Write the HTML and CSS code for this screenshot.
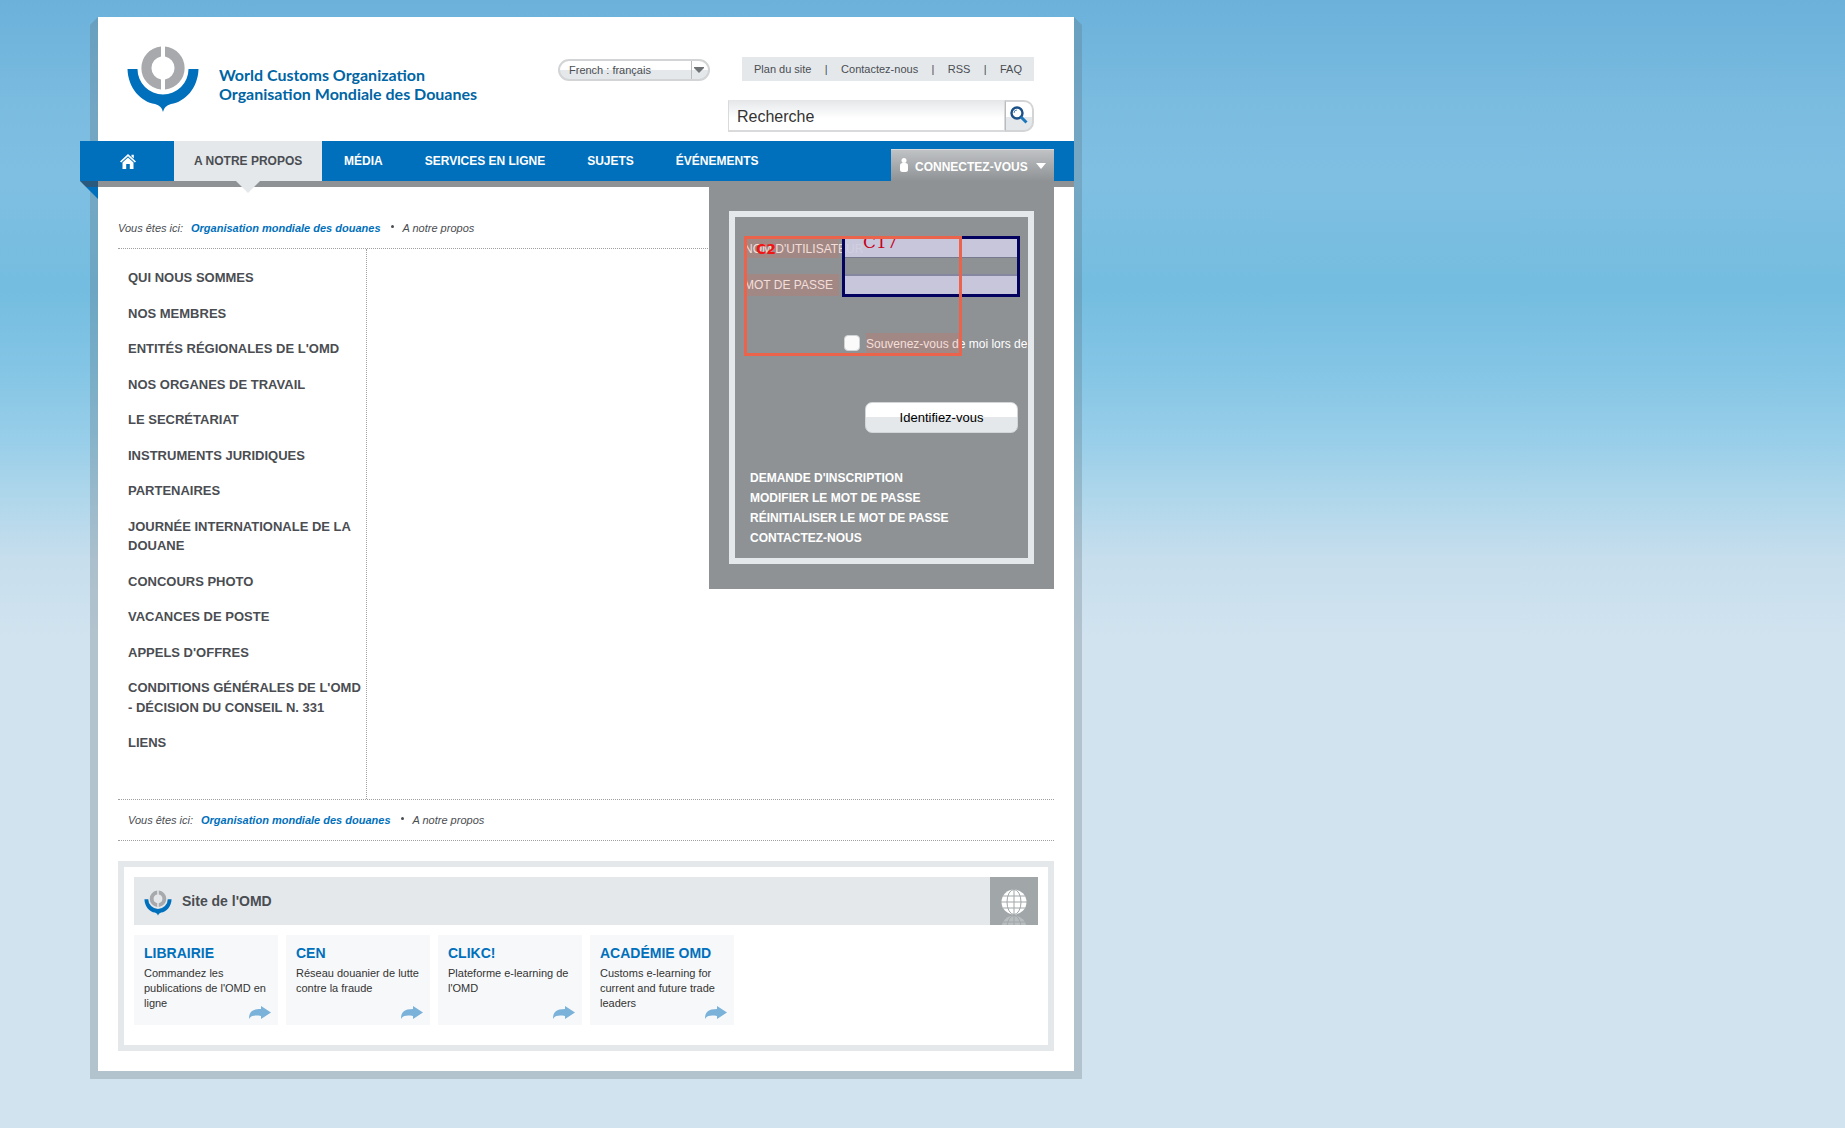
FILE: index.html
```html
<!DOCTYPE html>
<html lang="fr">
<head>
<meta charset="utf-8">
<title>Organisation mondiale des douanes</title>
<link rel="stylesheet" href="styles.css">
</head>
<body>
<svg class="defs" aria-hidden="true">
  <symbol id="anchor" viewBox="0 0 72 68">
    <path class="ring" d="M34 1.400A21.700 21.700 0 0 0 34 44.600V34.500A11.700 11.700 0 0 1 34 11.500ZM38 1.400A21.700 21.700 0 0 1 38 44.600V34.500A11.700 11.700 0 0 0 38 11.500Z"/>
    <path class="hull" d="M.5 24H10.500A25.500 25.500 0 0 0 61.500 24H71.500C71 43 58 57 44 59Q37 61 36 67Q35 61 28 59C14 57 1 43 .5 24Z"/>
  </symbol>
  <symbol id="share" viewBox="0 0 22 13">
    <path d="M0 13C0 6 3 3 12 3V0L22 6.500L12 13V10C6 9 2 9.500 0 13Z" fill="#7ab2da"/>
  </symbol>
</svg>
<div class="page">
  <header class="header">
    <a class="brand" href="#">
      <svg class="brand-mark"><use href="#anchor"/></svg>
      <span class="brand-name">World Customs Organization<br>Organisation Mondiale des Douanes</span>
    </a>
    <div class="language">
      <select aria-label="Langue"><option>French : français</option></select>
      <svg class="language-arrow" viewBox="0 0 10 6"><path d="M0 0H10V1L5 6L0 1Z" fill="#6f7376"/></svg>
    </div>
    <div class="tools">
      <nav class="quick" aria-label="Liens rapides">
        <a href="#">Plan du site</a><span>|</span><a href="#">Contactez-nous</a><span>|</span><a href="#">RSS</a><span>|</span><a href="#">FAQ</a>
      </nav>
      <form class="search">
        <input type="text" value="Recherche" aria-label="Recherche">
        <button type="button" aria-label="Lancer la recherche">
          <svg viewBox="0 0 18 18"><circle cx="7" cy="7" r="5.500" fill="none" stroke="#1c5088" stroke-width="2.400"/><path d="M4 7A3 3 0 0 1 7 4" fill="none" stroke="#4d84b5"/><path d="M11 11L16.500 16.500" stroke="#1d78bb" stroke-width="3"/></svg>
        </button>
      </form>
    </div>
  </header>

  <nav class="menu" aria-label="Menu principal">
    <a class="home" href="#" aria-label="Accueil">
      <svg viewBox="0 0 16 15"><path d="M8 0L16 7.500L14.800 8.500L8 2.200L1.200 8.500L0 7.500ZM11.500 .8H13.800V4.500L11.500 2.500Z" fill="#fff"/><path d="M2.500 8.500L8 3.500L13.500 8.500V15H9.800V10H6.200V15H2.500Z" fill="#fff"/></svg>
    </a>
    <a class="active" href="#">A NOTRE PROPOS</a>
    <a href="#">MÉDIA</a>
    <a href="#">SERVICES EN LIGNE</a>
    <a href="#">SUJETS</a>
    <a href="#">ÉVÉNEMENTS</a>
    <button class="connect" type="button">
      <svg class="person" viewBox="0 0 8 14"><circle cx="4" cy="2.500" r="2.500" fill="#fff"/><rect x="0" y="5" width="8" height="9" rx="2.500" fill="#fff"/></svg>
      CONNECTEZ-VOUS
      <svg class="caret" viewBox="0 0 10 6"><path d="M0 0H10L5 6Z" fill="#fff"/></svg>
    </button>
  </nav>

  <aside class="login">
    <div class="login-box">
      <form class="login-form">
        <label class="caption caption-user" for="user">NOM D'UTILISATEUR</label>
        <input class="field" id="user" type="text">
        <label class="caption" for="pass">MOT DE PASSE</label>
        <input class="field" id="pass" type="password">
        <div class="remember">
          <input id="keep" type="checkbox">
          <label for="keep"><span>Souvenez-vous d</span>e moi lors de</label>
        </div>
        <button class="submit" type="button">Identifiez-vous</button>
        <div class="mark mark-inputs"><span>C17</span></div>
        <div class="mark mark-labels"><span>C2</span></div>
      </form>
      <ul class="login-links">
        <li><a href="#">DEMANDE D'INSCRIPTION</a></li>
        <li><a href="#">MODIFIER LE MOT DE PASSE</a></li>
        <li><a href="#">RÉINITIALISER LE MOT DE PASSE</a></li>
        <li><a href="#">CONTACTEZ-NOUS</a></li>
      </ul>
    </div>
  </aside>

  <div class="content">
    <p class="crumbs"><span>Vous êtes ici:</span><a href="#">Organisation mondiale des douanes</a><i class="dot"></i><span>A notre propos</span></p>
    <main class="columns">
      <ul class="side">
        <li><a href="#">QUI NOUS SOMMES</a></li>
        <li><a href="#">NOS MEMBRES</a></li>
        <li><a href="#">ENTITÉS RÉGIONALES DE L'OMD</a></li>
        <li><a href="#">NOS ORGANES DE TRAVAIL</a></li>
        <li><a href="#">LE SECRÉTARIAT</a></li>
        <li><a href="#">INSTRUMENTS JURIDIQUES</a></li>
        <li><a href="#">PARTENAIRES</a></li>
        <li><a href="#">JOURNÉE INTERNATIONALE DE LA DOUANE</a></li>
        <li><a href="#">CONCOURS PHOTO</a></li>
        <li><a href="#">VACANCES DE POSTE</a></li>
        <li><a href="#">APPELS D'OFFRES</a></li>
        <li><a href="#">CONDITIONS GÉNÉRALES DE L'OMD - DÉCISION DU CONSEIL N. 331</a></li>
        <li><a href="#">LIENS</a></li>
      </ul>
    </main>
    <p class="crumbs crumbs-end"><span>Vous êtes ici:</span><a href="#">Organisation mondiale des douanes</a><i class="dot"></i><span>A notre propos</span></p>

    <section class="sites">
      <div class="sites-head">
        <svg class="sites-mark"><use href="#anchor"/></svg>
        <h2>Site de l'OMD</h2>
        <div class="globe">
          <svg viewBox="0 0 48 48">
            <defs><g id="world"><circle cx="24" cy="25" r="12.500" fill="#fff"/><path d="M24 12V38M11 25H37M13 19H35M13 31H35" fill="none" stroke="#a1a7a9"/><ellipse cx="24" cy="25" rx="7" ry="12.500" fill="none" stroke="#a1a7a9"/></g></defs>
            <use href="#world"/>
            <use href="#world" opacity=".25" transform="translate(0 76) scale(1 -1)" />
          </svg>
        </div>
      </div>
      <div class="cards">
        <article><h3><a href="#">LIBRAIRIE</a></h3><p>Commandez les publications de l'OMD en ligne</p><svg><use href="#share"/></svg></article>
        <article><h3><a href="#">CEN</a></h3><p>Réseau douanier de lutte contre la fraude</p><svg><use href="#share"/></svg></article>
        <article><h3><a href="#">CLIKC!</a></h3><p>Plateforme e-learning de l'OMD</p><svg><use href="#share"/></svg></article>
        <article><h3><a href="#">ACADÉMIE OMD</a></h3><p>Customs e-learning for current and future trade leaders</p><svg><use href="#share"/></svg></article>
      </div>
    </section>
  </div>
</div>
</body>
</html>
```

FILE: styles.css
```css
* { box-sizing: border-box; }
body {
  margin: 0;
  padding: 17px 98px 58px;
  font: 11px/15px "Liberation Sans", Arial, sans-serif;
  color: #4a4d52;
  background: #d1e3ef linear-gradient(#6bb1da 0, #7abbe0 100px, #7fbfe2 175px, #74bde0 290px, #84c5e5 370px, #98cee9 440px, #b0d7eb 500px, #c7deed 560px, #d1e3ef 640px) no-repeat;
}
a { color: inherit; text-decoration: none; }
ul { list-style: none; margin: 0; padding: 0; }
p, h2, h3 { margin: 0; }
button, input, select { font: inherit; color: inherit; margin: 0; }
.defs { position: absolute; width: 0; height: 0; }
.ring { fill: #a7a9ac; }
.hull { fill: #0070bc; }

.page { position: relative; max-width: 976px; background: #fff; }
/* Folded shadow along the left, bottom and right edges */
.page::before {
  content: "";
  position: absolute;
  z-index: -1;
  inset: 0 -8px -8px;
  background: rgba(86, 100, 108, .25);
  clip-path: polygon(8px 0, calc(100% - 8px) 0, 100% 8px, 100% 100%, 0 100%, 0 8px);
}

.header { display: flex; height: 124px; padding: 0 40px 0 29px; }
.brand { display: flex; flex: 1; color: #0065a4; }
.brand-mark { width: 72px; height: 68px; margin-top: 28px; }
.brand-name { margin: 48px 0 0 20px; font: bold 16px/19px "Lato", sans-serif; white-space: nowrap; }
.language {
  position: relative;
  width: 152px;
  height: 22px;
  margin: 42px 18px 0 0;
  border: 2px solid #d3d4d6;
  border-radius: 11px;
  background: linear-gradient(#fff 50%, #e4e8eb 50%);
  overflow: hidden;
}
.language select {
  width: 100%;
  height: 18px;
  padding: 0 0 0 9px;
  border: 0;
  background: none;
  appearance: none;
}
.language::after { content: ""; position: absolute; right: 16px; top: 0; bottom: 0; width: 1px; background: #b9bbbd; }
.language-arrow { position: absolute; right: 4px; top: 6px; width: 10px; height: 6px; }
.tools { display: flex; flex-direction: column; align-items: flex-end; }
.quick { display: flex; justify-content: space-between; width: 292px; height: 24px; margin-top: 40px; padding: 0 12px; line-height: 24px; background: #e4e8eb; }
.search { display: flex; width: 306px; height: 32px; margin-top: 19px; }
.search input {
  flex: 1;
  min-width: 0;
  padding: 2px 8px 0;
  border: 1px solid #d8dadc;
  border-top-color: #e4e6e8;
  border-bottom-width: 2px;
  background: linear-gradient(#e6e8ea, #fff 60%);
  font-size: 16px;
  color: #333;
}
.search button {
  width: 29px;
  padding: 0 4px 2px;
  border: 2px solid #d3d4d6;
  border-left: 1px solid #b9bbbd;
  border-radius: 0 10px 10px 0;
  background: linear-gradient(#fff 55%, #e4e8eb 55%);
}
.search svg { display: block; width: 18px; height: 18px; }

.menu {
  position: relative;
  display: flex;
  height: 46px;
  margin-left: -18px;
  padding-right: 20px;
  background: linear-gradient(#006fbc, #006fbc) 0 0 / 100% 40px no-repeat, linear-gradient(#8e9295, #8e9295) 18px 40px no-repeat;
  font-size: 12px;
  font-weight: bold;
  line-height: 40px;
  white-space: nowrap;
  color: #fff;
}
/* Ribbon fold hanging from the left end of the bar */
.menu::before {
  content: "";
  position: absolute;
  left: 0;
  top: 40px;
  width: 18px;
  height: 18px;
  background: linear-gradient(#295a7e 6px, #006fbc 6px);
  clip-path: polygon(0 0, 100% 0, 100% 100%);
}
.menu a { height: 40px; padding: 0 21px; }
.menu .home { width: 94px; padding: 13px 0 0 40px; }
.home svg { display: block; width: 16px; height: 15px; }
.menu .active { position: relative; width: 148px; margin-right: 1px; padding: 0 20px; background: #e4e8eb; color: #4a4d52; }
.active::after {
  content: "";
  position: absolute;
  left: 50%;
  bottom: -12px;
  margin-left: -12px;
  border: solid transparent;
  border-width: 0 12px;
  border-top: 12px solid #e4e8eb;
}
.connect {
  display: flex;
  align-items: center;
  width: 163px;
  height: 40px;
  margin: 8px 0 0 auto;
  padding: 0 9px 6px;
  border: 0;
  border-top: 1px solid #d8dadc;
  background: linear-gradient(#c0c2c4, #8e9295 80%);
  white-space: nowrap;
}
.person { flex: none; width: 8px; height: 14px; margin: 0 7px 4px 0; }
.caret { flex: none; width: 10px; height: 6px; margin: 0 0 2px 8px; }

.login {
  position: absolute;
  z-index: 2;
  top: 170px;
  right: 20px;
  width: 345px;
  padding: 24px 20px 25px;
  background: #8e9295;
  color: #fff;
  font-size: 12px;
}
.login-box { overflow: hidden; padding: 19px 9px 10px; border: 6px solid #e4e8eb; }
.login-form {
  position: relative;
  display: grid;
  grid-template-columns: 98px 178px;
  grid-template-rows: 22px 22px;
  row-gap: 16px;
}
.caption { width: 95px; line-height: 22px; white-space: nowrap; color: #f3dfda; background: #a28885; }
.caption-user { padding-top: 2px; }
/* The fields let the end of a long caption show through */
.field { width: 178px; height: 22px; padding: 0 6px; border: 0; border-top: 2px solid #8587a0; background: rgba(205, 204, 226, .9); outline: 0; }
#user { border-top: 0; border-bottom: 1px solid #77798f; }
.remember { grid-column: 2; display: flex; gap: 6px; margin: 21px 0 0 2px; height: 22px; white-space: nowrap; line-height: 22px; }
.remember label { background: linear-gradient(#a28885, #a28885) 0 0 / 93px 100% no-repeat; }
.remember span { color: #f3dfda; }
.remember input { appearance: none; flex: none; width: 16px; height: 16px; margin-top: 2px; border: 1px solid #d0d2d3; border-radius: 4px; background: #fafafa; }
.submit {
  grid-column: 2;
  justify-self: end;
  width: 153px;
  height: 31px;
  margin: 31px 2px 0 0;
  border: 1px solid #d3d6d8;
  border-radius: 7px;
  background: linear-gradient(#fff 50%, #e4e8eb 50%);
  font-size: 13px;
  color: #000;
}
.mark { position: absolute; pointer-events: none; overflow: hidden; }
.mark-inputs { left: 98px; top: 0; width: 178px; height: 61px; border: 3px solid #03035f; }
.mark-inputs span { position: absolute; left: 18px; top: -7px; font: 17px/20px "DejaVu Serif", serif; color: #c80018; }
.mark-labels { left: 0; top: 0; width: 218px; height: 120px; border: 3px solid #ec634b; }
.mark-labels span { position: absolute; left: 9px; top: 0; font: bold 14px/20px "DejaVu Sans", sans-serif; color: #f01414; }
.login-links { margin-top: 35px; padding: 0 6px; font-weight: bold; line-height: 20px; }

.content { padding: 32px 20px 20px; }
.crumbs { display: flex; align-items: center; gap: 8px; height: 29px; padding-bottom: 11px; font-style: italic; }
.crumbs a { font-weight: bold; color: #0070bc; }
.dot { width: 3px; height: 3px; margin: 0 1px 3px 2px; border-radius: 50%; background: #4a4d52; }
.columns { border: dotted #a0a0a0; border-width: 1px 0; }
.side { width: 249px; min-height: 550px; padding: 19px 0 0 10px; border-right: 1px dotted #a0a0a0; font-size: 13px; font-weight: bold; line-height: 1.5; }
.side li { margin-bottom: 16px; }
.crumbs-end { height: 41px; padding: 0 10px; border-bottom: 1px dotted #a0a0a0; }

.sites { margin-top: 20px; padding: 10px 10px 20px; border: 6px solid #e4e8eb; }
.sites-head { display: flex; align-items: center; height: 48px; padding-left: 10px; background: #e4e8eb; }
.sites-mark { width: 28px; height: 26px; margin-top: 4px; }
.sites-head h2 { flex: 1; margin-left: 10px; font-size: 14px; }
.globe { width: 48px; height: 48px; background: #a1a7a9; }
.globe svg { display: block; }
.cards { display: flex; gap: 8px; margin-top: 10px; }
.cards article { position: relative; width: 144px; height: 90px; padding: 10px 10px 0; background: #f7f8fa; color: #333; }
.cards h3 { margin-bottom: 5px; font-size: 14px; line-height: 16px; color: #0070bc; white-space: nowrap; }
.cards p { line-height: 15px; }
.cards svg { position: absolute; right: 7px; bottom: 6px; width: 22px; height: 13px; }
```
